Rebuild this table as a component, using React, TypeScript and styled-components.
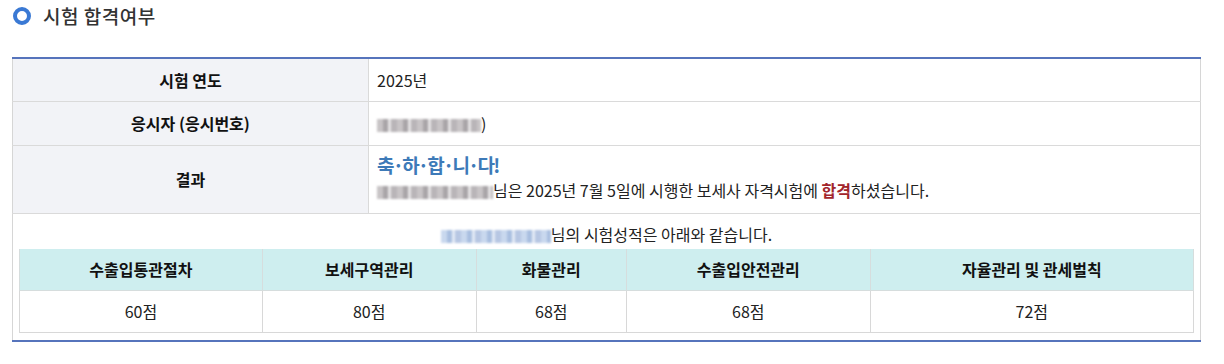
import { FC } from "react";
import styled, { createGlobalStyle } from "styled-components";

const GlobalStyle = createGlobalStyle`
  body {
    margin: 0;
    background: #fff;
    font-family: "Noto Sans CJK KR", "Noto Sans", sans-serif;
    color: #222;
  }
`;

const subjects = [
  { name: "수출입통관절차", score: 60, width: 243 },
  { name: "보세구역관리", score: 80, width: 214 },
  { name: "화물관리", score: 68, width: 150 },
  { name: "수출입안전관리", score: 68, width: 244 },
  { name: "자율관리 및 관세벌칙", score: 72, width: 324 },
];

const Mosaic: FC<{ w: number; tint?: "grey" | "blue" }> = ({ w, tint = "grey" }) => (
  <SMosaic style={{ width: w }} $tint={tint} />
);

const App: FC = () => {
  return (
    <>
      <GlobalStyle />
      <SPage>
        <STitleBar>
          <SRing />
          <STitle>시험 합격여부</STitle>
        </STitleBar>
        <SResultTable>
          <tbody>
            <tr>
              <SLabel style={{ height: 43 }}>시험 연도</SLabel>
              <SValue>2025년</SValue>
            </tr>
            <tr>
              <SLabel style={{ height: 44 }}>응시자 (응시번호)</SLabel>
              <SValue>
                <Mosaic w={104} />)
              </SValue>
            </tr>
            <tr>
              <SLabel style={{ height: 68 }}>결과</SLabel>
              <SValue>
                <SCongrats>축·하·합·니·다!</SCongrats>
                <SLine>
                  <Mosaic w={116} />님은 2025년 7월 5일에 시행한 보세사 자격시험에 <SPass>합격</SPass>하셨습니다.
                </SLine>
              </SValue>
            </tr>
            <tr>
              <SWide colSpan={2}>
                <SScoreIntro>
                  <Mosaic w={110} tint="blue" />님의 시험성적은 아래와 같습니다.
                </SScoreIntro>
                <SScoreTable>
                  <thead>
                    <tr>
                      {subjects.map((s) => (
                        <SScoreHead key={s.name} style={{ width: s.width }}>
                          {s.name}
                        </SScoreHead>
                      ))}
                    </tr>
                  </thead>
                  <tbody>
                    <tr>
                      {subjects.map((s) => (
                        <SScoreCell key={s.name}>{s.score}점</SScoreCell>
                      ))}
                    </tr>
                  </tbody>
                </SScoreTable>
              </SWide>
            </tr>
          </tbody>
        </SResultTable>
      </SPage>
    </>
  );
};

export default App;

const SPage = styled.div`
  padding: 4px 23px 0 12px;
`;

const STitleBar = styled.div`
  display: flex;
  align-items: center;
  height: 24px;
  padding-left: 1px;
  margin-bottom: 29px;
`;

const SRing = styled.span`
  box-sizing: border-box;
  width: 18px;
  height: 18px;
  border-radius: 50%;
  border: 4px solid #3a79d4;
`;

const STitle = styled.h2`
  margin: 0 0 0 12px;
  font-size: 19px;
  font-weight: 500;
  letter-spacing: 0.5px;
  color: #333;
  line-height: 24px;
`;

const SResultTable = styled.table`
  width: 100%;
  border-collapse: collapse;
  border-top: 2px solid #5674bc;
  border-bottom: 2px solid #5674bc;
  border-left: 1px solid #d6d6d6;
  border-right: 1px solid #d6d6d6;
  font-size: 16px;
`;

const SLabel = styled.th`
  box-sizing: border-box;
  width: 356px;
  background: #f2f3f7;
  border: 1px solid #dadada;
  border-left: none;
  font-weight: 700;
  color: #111;
  text-align: center;
  padding: 0;
`;

const SValue = styled.td`
  border: 1px solid #dadada;
  border-right: none;
  padding: 0 8px;
  color: #222;
  vertical-align: middle;
`;

const SMosaic = styled.span<{ $tint: "grey" | "blue" }>`
  display: inline-block;
  height: 13px;
  vertical-align: -2px;
  filter: blur(0.8px);
  background-image: ${(p) =>
    p.$tint === "blue"
      ? "repeating-linear-gradient(90deg, #c9d8ee 0 6px, #a9bfe0 6px 11px, #e4ebf5 11px 14px, #b7c7e3 14px 20px)"
      : "repeating-linear-gradient(90deg, #c8c4c6 0 6px, #a9a5a8 6px 11px, #e6e4e5 11px 14px, #b9b5b8 14px 20px)"};
`;

const SCongrats = styled.div`
  font-size: 19px;
  font-weight: 700;
  letter-spacing: -1.8px;
  color: #3d7ab8;
  line-height: 24px;
  margin-top: 2px;
`;

const SLine = styled.div`
  line-height: 26px;
  margin-bottom: 4px;
`;

const SPass = styled.b`
  color: #a2252b;
`;

const SWide = styled.td`
  padding: 9px 6px 7px 6px;
  border-top: 1px solid #dadada;
`;

const SScoreIntro = styled.div`
  text-align: center;
  line-height: 22px;
  margin-bottom: 4px;
  color: #222;
`;

const SScoreTable = styled.table`
  width: 100%;
  border-collapse: collapse;
  font-size: 16px;
`;

const SScoreHead = styled.th`
  height: 41px;
  padding: 0;
  background: #ceeeef;
  border: 1px solid #d6dddd;
  border-top: none;
  font-weight: 700;
  color: #111;
`;

const SScoreCell = styled.td`
  height: 41px;
  padding: 0;
  text-align: center;
  border: 1px solid #d8d8d8;
  color: #222;
`;
